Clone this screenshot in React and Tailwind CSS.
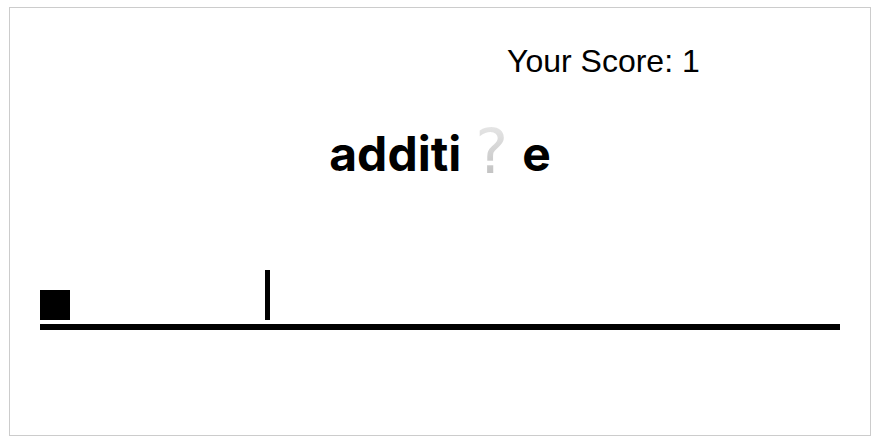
import React from 'react';

const word = ['a', 'd', 'd', 'i', 't', 'i', null, 'e'];

export default function App() {
  return (
    <div className="min-h-[447px] bg-white pt-[7px] pl-[9px]">
      <div className="w-[862px] h-[429px] border border-[#cccccc] bg-white">
        <div
          className="pt-[35px] pl-[497px] text-[32px] leading-[36px] text-black"
          style={{ fontFamily: '"Liberation Sans", Arial, sans-serif' }}
        >
          Your Score: 1
        </div>

        <div
          className="mt-[46px] flex justify-center text-[48px] leading-[58px] font-bold text-black"
          style={{ fontFamily: 'Inter, "Noto Sans", sans-serif' }}
        >
          {word.map((ch, i) =>
            ch ? (
              <span key={i}>{ch}</span>
            ) : (
              <span
                key={i}
                className="mx-[14px] -mt-[4px] font-normal text-[62px] leading-[62px] bg-gradient-to-b from-[#e9e9e9] to-[#bdbdbd] bg-clip-text text-transparent"
                style={{ fontFamily: '"DejaVu Sans", sans-serif' }}
              >
                ?
              </span>
            )
          )}
        </div>

        <div className="mt-[87px] ml-[30px] w-[800px]">
          <div className="relative h-[50px]">
            <div className="absolute left-0 bottom-0 w-[30px] h-[30px] bg-black" />
            <div className="absolute left-[225px] bottom-0 w-[5px] h-[50px] bg-black" />
          </div>
          <div className="mt-[4px] h-[6px] bg-black" />
        </div>
      </div>
    </div>
  );
}
